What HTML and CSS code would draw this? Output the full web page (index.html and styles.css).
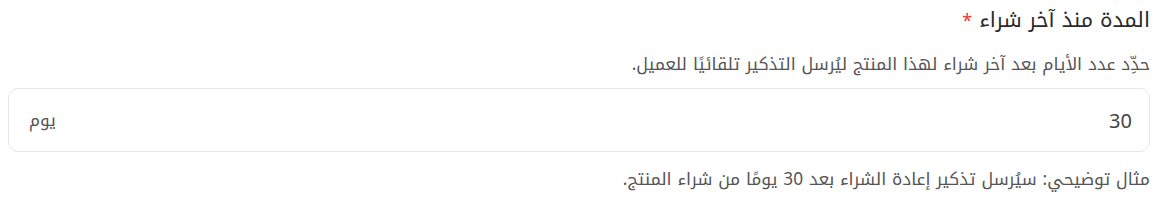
FILE: index.html
```html
<!DOCTYPE html>
<html lang="ar" dir="rtl">
<head>
  <meta charset="UTF-8">
  <title>المدة منذ آخر شراء</title>
  <link rel="stylesheet" href="styles.css">
</head>
<body>
  <div class="field">
    <label class="field-label" for="days">المدة منذ آخر شراء <span class="req">*</span></label>
    <p class="field-help">حدِّد عدد الأيام بعد آخر شراء لهذا المنتج ليُرسل التذكير تلقائيًا للعميل.</p>

    <div class="input-box">
      <input type="text" id="days" value="30">
      <span class="suffix">يوم</span>
    </div>

    <p class="field-example">مثال توضيحي: سيُرسل تذكير إعادة الشراء بعد 30 يومًا من شراء المنتج.</p>
  </div>
</body>
</html>
```

FILE: styles.css
```css
body {
  font-family: "Noto Kufi Arabic", "Noto Sans", sans-serif;
  background: #fff;
  margin: 0;
  padding: 6px 9px 0 8px;
}

.field {
  display: flex;
  flex-direction: column;
}

.field-label {
  font-size: 21px;
  color: #2a2a2a;
  line-height: 28px;
}

.req {
  color: #e53935;
  font-size: 18px;
}

.field-help {
  font-size: 17.3px;
  color: #555;
  margin: 17px 0 0;
  line-height: 26px;
}

.input-box {
  display: flex;
  align-items: center;
  height: 62px;
  margin-top: 10px;
  border: 1px solid #e6e6e6;
  border-radius: 10px;
  padding: 0 17px 0 20px;
}

.input-box input {
  flex: 1;
  border: none;
  outline: none;
  font-family: "Noto Sans", sans-serif;
  font-size: 20px;
  color: #444;
  background: transparent;
  padding: 0;
}

.suffix {
  font-size: 17px;
  color: #555;
}

.field-example {
  font-size: 17.3px;
  color: #555;
  margin: 15px 0 0;
  line-height: 26px;
}
```
